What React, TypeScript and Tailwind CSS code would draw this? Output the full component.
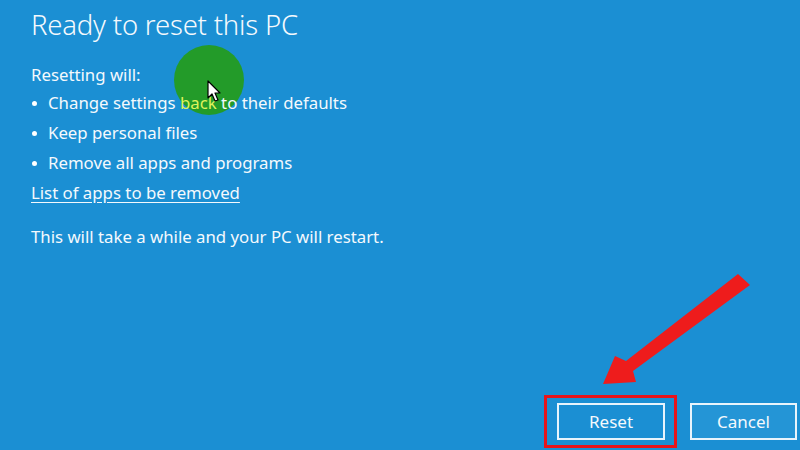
import React from "react";

const font = { fontFamily: '"Noto Sans", "Open Sans", sans-serif' };

function Bullet({ children }: { children: React.ReactNode }) {
  return (
    <li className="flex h-[30px] items-center">
      <span className="flex w-[17px] items-center pl-[1px]">
        <span className="h-[5px] w-[5px] rounded-full bg-white" />
      </span>
      <span>{children}</span>
    </li>
  );
}

export default function App() {
  return (
    <div className="relative flex h-[450px] w-[800px] flex-col overflow-hidden bg-[#1b8fd3] text-[#f4f9fd]" style={font}>
      {/* highlight circle behind the text */}
      <div className="absolute left-[174px] top-[45px] h-[70px] w-[70px] rounded-full bg-[#239b29]" />

      <div className="relative px-[31px]">
        <h1 className="mt-[7px] text-[27.5px] font-light leading-[36px] tracking-[-0.2px]">
          Ready to reset this PC
        </h1>

        <div className="mt-[17px] text-[16.8px] leading-[30px]">
          <p className="h-[30px]">Resetting will:</p>
          <ul className="-mt-[2px]">
            <Bullet>
              Change settings <span className="text-[#dff25c]">back</span> to their defaults
            </Bullet>
            <Bullet>Keep personal files</Bullet>
            <Bullet>Remove all apps and programs</Bullet>
          </ul>
          <a className="block h-[30px] underline underline-offset-[3px]">List of apps to be removed</a>
          <p className="mt-[14px]">This will take a while and your PC will restart.</p>
        </div>
      </div>

      <div className="relative mt-auto mb-[10px] flex justify-end gap-[25px] pr-[3px]">
        <button className="flex h-[37px] w-[108px] items-center justify-center border-2 border-[#e8f4fc] text-[17px]">
          Reset
        </button>
        <button className="flex h-[37px] w-[107px] items-center justify-center border-2 border-[#e8f4fc] bg-[#2495d6] text-[17px]">
          Cancel
        </button>
      </div>

      {/* red annotation box */}
      <div className="absolute left-[544px] top-[395px] h-[53px] w-[133px] border-[3px] border-[#e8141b]" />

      {/* red arrow */}
      <svg className="absolute left-0 top-0" width="800" height="450" viewBox="0 0 800 450">
        <polygon
          points="738,274 750,285 633,371 636,382 603,384 615,356 626,361"
          fill="#ee1c1c"
        />
      </svg>

      {/* mouse cursor */}
      <svg className="absolute left-[207px] top-[80px]" width="16" height="24" viewBox="0 0 16 24">
        <path
          d="M1 1 L1 18 L5 14 L8 21 L11 20 L8 13 L13 13 Z"
          fill="#fff"
          stroke="#000"
          strokeWidth="1.2"
          strokeLinejoin="round"
        />
      </svg>
    </div>
  );
}
